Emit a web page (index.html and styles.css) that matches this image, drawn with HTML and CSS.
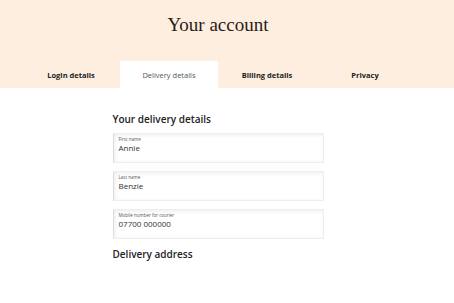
FILE: index.html
```html
<!DOCTYPE html>
<html>
<head>
    <title>Your account</title>
    <link rel="stylesheet" href="styles.css">
</head>
<body>
    <!-- Account header -->
    <header class="account-header">
        <h1>Your account</h1>
        <nav class="tabs">
            <a href="#" class="tab">Login details</a>
            <a href="#" class="tab active">Delivery details</a>
            <a href="#" class="tab">Billing details</a>
            <a href="#" class="tab">Privacy</a>
        </nav>
    </header>

    <!-- Delivery form -->
    <main class="content">
        <h2>Your delivery details</h2>
        <div class="field">
            <label>First name</label>
            <div class="value">Annie</div>
        </div>
        <div class="field">
            <label>Last name</label>
            <div class="value">Benzie</div>
        </div>
        <div class="field">
            <label>Mobile number for courier</label>
            <div class="value">07700 000000</div>
        </div>
        <h2 class="section-title">Delivery address</h2>
    </main>
</body>
</html>
```

FILE: styles.css
```css
* {
    margin: 0;
    padding: 0;
    box-sizing: border-box;
}

body {
    font-family: 'Open Sans', 'Liberation Sans', sans-serif;
    background: white;
    color: #222;
}

/* Header */
.account-header {
    background: #fdeedf;
    padding-right: 18px;
}

.account-header h1 {
    font-family: 'Liberation Serif', serif;
    font-weight: 400;
    font-size: 19px;
    color: #2a1c18;
    text-align: center;
    padding-top: 14px;
    height: 61px;
}

.tabs {
    display: flex;
    justify-content: center;
}

.tab {
    width: 98px;
    height: 27px;
    display: flex;
    align-items: center;
    justify-content: center;
    font-size: 7.5px;
    font-weight: 700;
    color: #222;
    text-decoration: none;
}

.tab.active {
    background: white;
    font-weight: 400;
    color: #555;
}

/* Form */
.content {
    width: 211px;
    margin: 0 auto;
    position: relative;
    left: -9px;
    padding-top: 24px;
}

.content h2 {
    font-size: 10px;
    font-weight: 600;
    color: #222;
    margin-bottom: 7px;
}

.field {
    height: 30px;
    margin-bottom: 8px;
    padding: 2px 5px;
    border: 1px solid #eee;
    border-left-color: #ddd;
    box-shadow: inset 1px 1px 4px rgba(0, 0, 0, 0.08);
    background: white;
}

.field label {
    display: block;
    font-size: 4.5px;
    color: #555;
    line-height: 6px;
}

.field .value {
    font-size: 8px;
    color: #333;
    line-height: 11px;
}

.content .section-title {
    margin-top: 5px;
}
```
